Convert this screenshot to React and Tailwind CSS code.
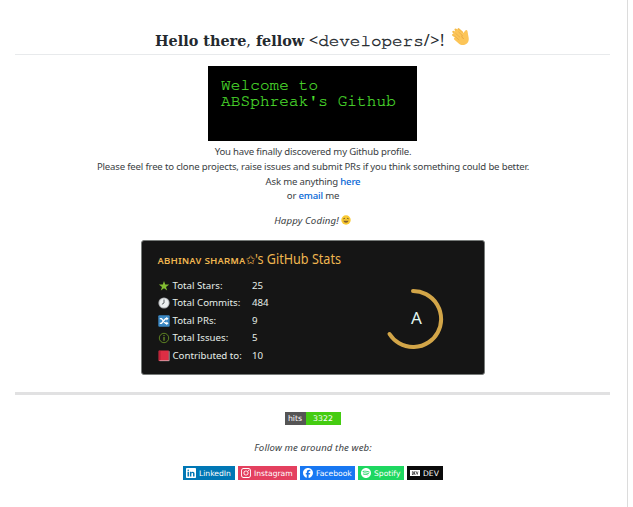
import { SiLinkedin, SiInstagram, SiFacebook, SiSpotify, SiDevdotto } from "react-icons/si";

function Wave() {
  return (
    <svg width="18" height="18" viewBox="0 0 18 18" className="shrink-0">
      <path d="M1.400 3.800 4 6.500M3.600 1.600 8 5.600M6.600 1.200 10 4.200M1.200 7 5 10" stroke="#f5bb4b" strokeWidth="2.200" strokeLinecap="round" />
      <path d="M1.600 4.200 5.600 1.600l5.300 3.600c1.800-.8 2-3.200 3.300-3.200 1.300 0 1.500 1.600 1.600 3l.9 5c.5 3-.8 5.400-3.400 6.400-2.500 1-4.600.6-6.600-1L2.200 11.600c-.8-1 .1-1.800 1-1.500L1.600 7.600z" fill="#fcc558" />
      <path d="m3.400 5.200 4.600 4.100M2.600 8l4.600 4M6.400 3.800l3.800 3.400" stroke="#e3a544" strokeWidth=".6" fill="none" />
      <path d="M10.200 7.200c-1 2 .4 3 1.600 3.400" stroke="#dc9a38" strokeWidth=".7" fill="none" />
    </svg>
  );
}

function Smile() {
  return (
    <svg width="10" height="10" viewBox="0 0 10 10" className="mb-[3px] ml-[2px]">
      <circle cx="5" cy="5" r="4.700" fill="#f9c932" />
      <path d="M2.300 3.900q.9-1.200 1.800 0M5.900 3.900q.9-1.200 1.800 0" stroke="#5d4520" strokeWidth=".8" fill="none" />
      <path d="M2.300 5.700h5.400Q7 7.700 5 7.700T2.300 5.700z" fill="#81602d" />
    </svg>
  );
}

function StatIcon({ kind }) {
  return (
    <svg width="12" height="12" viewBox="0 0 12 12" className="mr-[3px] shrink-0">
      {kind === "star" && <path d="m6 .9 1.250 3.700h3.900L8 6.900l1.200 3.700L6 8.300l-3.200 2.300L4 6.900.85 4.600h3.900z" fill="#83bd31" />}
      {kind === "clock" && (
        <>
          <circle cx="6" cy="6" r="5.600" fill="#b0b3b6" />
          <circle cx="6" cy="6" r="4.600" fill="#edf0f0" />
          <path d="M6 2.500V6L3.900 7.300" stroke="#4e5357" strokeWidth=".9" fill="none" />
        </>
      )}
      {kind === "shuffle" && (
        <>
          <rect x=".3" y=".3" width="11.400" height="11.400" rx="1" fill="#3b88c3" />
          <path d="M1.800 3.700h1.700l4 4.600h1.700M1.800 8.300h1.700l4-4.600h1.700" stroke="#fff" strokeWidth="1.300" fill="none" />
          <path d="m8.300 1.800 2.300 1.900-2.300 1.900zM8.300 6.400l2.300 1.900-2.300 1.900z" fill="#fff" />
        </>
      )}
      {kind === "info" && (
        <>
          <circle cx="6" cy="6" r="4.700" stroke="#6f9c26" strokeWidth=".8" fill="none" />
          <path d="M6 5v3.700M6 3.100v1" stroke="#83b52b" strokeWidth="1" />
        </>
      )}
      {kind === "book" && (
        <>
          <path d="M1.500.6h9.300v10.500H1.300C.6 11 .5 10.500.5 9.800V1.600c0-.6.400-1 1-1z" fill="#dd2e44" />
          <path d="M1.900.7v9.600" stroke="#a0192e" strokeWidth=".8" />
          <path d="M1.500 10.700h9.700V1.200" stroke="#d5c8cb" strokeWidth=".7" fill="none" />
        </>
      )}
    </svg>
  );
}

const stats = [
  ["star", "Total Stars:", "25"],
  ["clock", "Total Commits:", "484"],
  ["shuffle", "Total PRs:", "9"],
  ["info", "Total Issues:", "5"],
  ["book", "Contributed to:", "10"],
];

const links = [
  [SiLinkedin, "LinkedIn", "w-[52px] bg-[#0077b5]"],
  [SiInstagram, "Instagram", "w-[59px] bg-[#e4405f]"],
  [SiFacebook, "Facebook", "w-[55px] bg-[#1877f2]"],
  [SiSpotify, "Spotify", "w-[46px] bg-[#1ed760]"],
  [SiDevdotto, "DEV", "w-[36px] bg-[#0a0a0a]"],
];

export default function App() {
  return (
    <div className="h-[507px] w-[628px] overflow-hidden border-r border-[#dcdcdc] bg-white pl-[15px] font-['Noto_Sans',sans-serif] text-[9.600px] text-[#3a3e43]">
      <main className="flex w-[595px] flex-col items-center whitespace-nowrap">
        <h1 className="flex h-[55px] w-full items-end justify-center border-b border-[#e8eaec] pb-[4px] text-[#24292e]">
          <span className="w-[150px] font-['DejaVu_Serif',serif] text-[14.400px] leading-[17px] font-bold">
            Hello there<span className="font-normal">,</span> fellow
          </span>
          <span className="ml-[4px] flex w-[139px] items-baseline text-[16px] leading-[17px]">
            <span>&lt;</span>
            <span className="font-['FreeMono','Liberation_Mono',monospace] text-[17.600px] [-webkit-text-stroke:0.400px_#24292e]">developers</span>
            <span className="tracking-[0.600px]">/&gt;!</span>
          </span>
          <span className="ml-[4px] pb-[4px]"><Wave /></span>
        </h1>

        <div className="mt-[11px] h-[75px] w-[209px] bg-black pt-[11px] pl-[13px] font-['FreeMono','Liberation_Mono',monospace] text-[16px] leading-[16px] tracking-[0.120px] text-[#50e030] [-webkit-text-stroke:0.150px_#50e030]">
          <p>Welcome to</p>
          <p>ABSphreak's Github</p>
        </div>

        <div className="mt-[4px] ml-[1px] text-center leading-[14.800px] tracking-[-0.180px]">
          <p>You have finally discovered my Github profile.</p>
          <p>Please feel free to clone projects, raise issues and submit PRs if you think something could be better.</p>
          <p>Ask me anything <a className="font-medium text-[#0366d6]">here</a></p>
          <p>or <a className="font-medium text-[#0366d6]">email</a> me</p>
        </div>
        <p className="mt-[10px] flex h-[15px] items-center text-[9.700px] tracking-[0.120px] italic">Happy Coding!<Smile /></p>

        <section className="mt-[11px] ml-px flex h-[135px] w-[344px] rounded-[3px] border border-[#777b79] bg-[#151515] pl-[15.500px] text-[#e5eee9]">
          <div className="w-[227px] pt-[9px]">
            <h2 className="flex h-[17px] items-baseline text-[14px] leading-[17px] text-[#efb650]">
              <span className="text-[11.600px] font-medium">ᴀʙʜɪɴᴀᴠ sʜᴀʀᴍᴀ</span>
              <span className="font-['DejaVu_Sans',sans-serif] text-[12px]">✩</span>
              <span className="origin-left scale-x-[0.900]">'s GitHub Stats</span>
            </h2>
            <div className="mt-[10px] text-[9.700px]">
              {stats.map(([kind, label, value]) => (
                <div key={kind} className="flex h-[17.500px] items-center">
                  <StatIcon kind={kind} />
                  <span className="w-[79.500px]">{label}</span>
                  <span>{value}</span>
                </div>
              ))}
            </div>
          </div>
          <svg width="64" height="64" viewBox="0 0 64 64" className="mt-[46px]">
            <path d="M28 4A28 28 0 1 1 4.500 47" stroke="#d2a548" strokeWidth="4" strokeLinecap="round" fill="none" />
            <text x="31.500" y="37" textAnchor="middle" fill="#e1f5ef" fontSize="17" fontFamily="Noto Sans">A</text>
          </svg>
        </section>

        <hr className="mt-[17px] h-[3px] w-full border-0 bg-[#e1e1e2]" />
        <div className="mt-[17px] flex h-[13px] w-[56px] text-center font-['DejaVu_Sans',sans-serif] text-[7.800px] leading-[14px] text-white">
          <span className="w-[21px] bg-[#555]">hits</span>
          <span className="w-[35px] bg-[#4c1]">3322</span>
        </div>
        <p className="mt-[15px] h-[15px] pl-[1px] text-[9.600px] leading-[15px] tracking-[0.120px] italic">Follow me around the web:</p>
        <div className="mt-[11px] flex gap-[3px] font-['DejaVu_Sans',sans-serif] text-[7.600px] leading-[14px] text-white">
          {links.map(([Icon, label, style]) => (
            <a key={label} className={"flex h-[14px] items-center gap-[3px] pl-[3px] " + style}>
              <Icon size={10} className="shrink-0" />
              <span className="pt-[1px] pl-[0.500px]">{label}</span>
            </a>
          ))}
        </div>
      </main>
    </div>
  );
}
